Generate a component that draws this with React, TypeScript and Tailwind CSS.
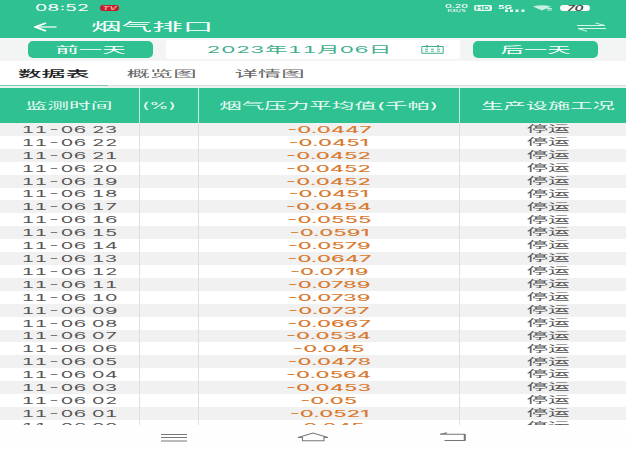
import clsx from 'clsx';
import type { ReactNode } from 'react';

type Row = { time: string; value: string; status: string };

const VALUES = [
  '-0.0447', '-0.0451', '-0.0452', '-0.0452', '-0.0452', '-0.0451',
  '-0.0454', '-0.0555', '-0.0591', '-0.0579', '-0.0647', '-0.0719',
  '-0.0789', '-0.0739', '-0.0737', '-0.0667', '-0.0534', '-0.045',
  '-0.0478', '-0.0564', '-0.0453', '-0.05', '-0.0521', '-0.045',
];

// 23時から00時まで、1時間ごとのデータ
const rows: Row[] = VALUES.map((value, i) => ({
  time: `11-06 ${String(23 - i).padStart(2, '0')}`,
  value,
  status: '停运',
}));

// 横長の文字
function Wide({ className, children }: { className?: string; children: ReactNode }) {
  return (
    <span className={clsx('inline-block whitespace-nowrap leading-none', className)}>
      {children}
    </span>
  );
}

function StatusBar() {
  return (
    <div className="flex h-4 items-center text-white">
      <div className="flex w-[100px] pl-[35px] pt-px">
        <Wide className="origin-left scale-x-[2.3] text-[8.5px]">08:52</Wide>
      </div>
      <div className="flex h-[6px] w-[19px] items-center justify-center rounded-[3px] bg-[#c01f2b]">
        <Wide className="scale-x-[2] text-[5px] font-bold italic text-[#f3a0a0]">TV</Wide>
      </div>
      <div className="ml-[326px] flex w-[23px] flex-col items-center">
        <Wide className="scale-x-[2.1] text-[5px] font-medium">0.20</Wide>
        <Wide className="scale-x-[2.1] text-[4px]">KB/s</Wide>
      </div>
      <div className="ml-[6px] flex h-[6px] w-[18px] items-center justify-center rounded-[2px] bg-[#e4f7f0]">
        <Wide className="scale-x-[2] text-[5px] font-bold text-[#2fc192]">HD</Wide>
      </div>
      <div className="ml-[6px] flex h-[7px] w-[27px] items-start">
        <Wide className="origin-left scale-x-[2] text-[5px] font-bold">5G</Wide>
        <svg className="mt-[4px] h-[3px] w-[20px]" viewBox="0 0 20 3" fill="#e4f7f0">
          <path d="M0 .5h3v2.500H0zM5 .5h3v2.500H5zM10.500 .5h3v2.500h-3zM16.500 .5h3v2.500h-3z" />
        </svg>
      </div>
      <svg className="ml-[8px] h-[6px] w-[20px]" viewBox="0 0 20 6">
        <path d="M0 1.5Q9-1 18 1.5L9 5.5Z" fill="#c8f0e0" />
        <path d="M14 3.5h5M14 5h5" stroke="#e4f7f0" strokeWidth=".8" />
      </svg>
      <div className="ml-[7px] flex h-[6px] w-[30px] items-center justify-center rounded-[3px] bg-[#f4fbf8]">
        <Wide className="scale-x-[1.95] text-[7px] font-semibold italic text-[#444]">70</Wide>
      </div>
    </div>
  );
}

function TitleBar() {
  return (
    <div className="flex h-[22px] items-center text-white">
      <svg className="ml-[34px] h-[10px] w-[23px] shrink-0" viewBox="0 0 23 10" fill="none" stroke="white">
        <path d="M1.5 5H22.5" strokeWidth="1.2" />
        <path d="M12 1L1.5 5L12 9" strokeWidth="1.8" />
      </svg>
      <div className="ml-[34px] flex w-[450px] shrink-0">
        <Wide className="origin-left scale-x-[2.78] text-[11px]">烟气排口</Wide>
      </div>
      <svg className="ml-[36px] h-[10px] w-[29px] shrink-0" viewBox="0 0 29 10" fill="none" stroke="#d8f5ea" strokeWidth="1">
        <path d="M0 3.5H28L18.500 1M29 6.500H1L10 9.300" />
      </svg>
    </div>
  );
}

function DateBar() {
  return (
    <div className="flex h-[23px] items-center bg-[#f3f4f4] pl-[28px]">
      <button className="flex h-[17px] w-[125px] items-center justify-center rounded-[5px] bg-[#2fc192] text-white">
        <Wide className="scale-x-[2.6] text-[9px]">前一天</Wide>
      </button>
      <div className="ml-[13px] flex h-[19px] w-[294px] items-center rounded-[3px] bg-white text-[#3faf8c]">
        <div className="ml-[40px] flex w-[186px] justify-center">
          <Wide className="scale-x-[2.38] text-[9.500px] tabular-nums">2023年11月06日</Wide>
        </div>
        <svg className="ml-[29px] h-[9px] w-[23px]" viewBox="0 0 23 9" fill="none" stroke="#3faf8c">
          <path d="M.8 1.500H22.200V8.300H.8Z" strokeWidth="1" />
          <path d="M6 0V2.500M17 0V2.500" strokeWidth="1.600" />
          <path d="M4 4.200H19M4 6.200H19" strokeDasharray="3 3" strokeWidth=".9" />
        </svg>
      </div>
      <button className="ml-[13px] flex h-[17px] w-[125px] items-center justify-center rounded-[5px] bg-[#2fc192] text-white">
        <Wide className="scale-x-[2.6] text-[9px]">后一天</Wide>
      </button>
    </div>
  );
}

function Tabs() {
  return (
    <div className="flex h-[27px] flex-col bg-white">
      <div className="flex h-6 items-center text-[#666]">
        <div className="flex w-[108px] justify-center">
          <Wide className="scale-x-[2.65] text-[9px] font-medium text-[#222]">数据表</Wide>
        </div>
        <div className="flex w-[108px] justify-center">
          <Wide className="scale-x-[2.6] text-[9px]">概览图</Wide>
        </div>
        <div className="flex w-[108px] justify-center">
          <Wide className="scale-x-[2.6] text-[9px]">详情图</Wide>
        </div>
      </div>
      <div className="h-px bg-[#dedede]">
        <div className="h-px w-[108px] bg-[#7cc9ae]" />
      </div>
      <div className="h-[2px] bg-[#eaf3ef]" />
    </div>
  );
}

const COLS = 'grid grid-cols-[140px_59px_261px_166px]';

function DataTable() {
  return (
    <div className="h-[337px] overflow-hidden">
      <div className={clsx(COLS, 'h-[35px] bg-[#2fc192] text-[9px] text-[#e9fbf4]')}>
        <div className="flex items-center justify-center border-r border-[#c9eede]">
          <Wide className="scale-x-[2.42]">监测时间</Wide>
        </div>
        <div className="flex items-center border-r border-[#c9eede] pl-[2px]">
          <Wide className="origin-left scale-x-[2.200]">(%)</Wide>
        </div>
        <div className="flex items-center justify-center border-r border-[#c9eede]">
          <Wide className="scale-x-[2.5]">烟气压力平均值(千帕)</Wide>
        </div>
        <div className="flex items-center justify-center pl-[11px]">
          <Wide className="scale-x-[2.47]">生产设施工况</Wide>
        </div>
      </div>
      {rows.map((row, i) => (
        <div
          key={row.time}
          className={clsx(COLS, 'h-[12.910px] text-[9px] text-[#555]', i % 2 === 0 ? 'bg-[#f1f1f1]' : 'bg-white')}
        >
          <div className="flex items-center justify-center border-r border-[#dfdfdf]">
            <Wide className="scale-x-[2.23] tabular-nums">{row.time}</Wide>
          </div>
          <div className="border-r border-[#dfdfdf]" />
          <div className="flex items-center justify-center border-r border-[#dfdfdf] text-[#d97a30]">
            <Wide className="scale-x-[2.42] font-medium">{row.value}</Wide>
          </div>
          <div className="flex items-center justify-center pb-[1.500px] pl-[11px]">
            <Wide className="scale-x-[2.4]">{row.status}</Wide>
          </div>
        </div>
      ))}
    </div>
  );
}

function NavBar() {
  return (
    <div className="flex h-6 items-start bg-[#fefefe] pt-[7px]">
      <svg className="ml-[161px] mt-[2px] h-[8px] w-[26px]" viewBox="0 0 26 8" stroke="#777" strokeWidth="1">
        <path d="M0 .5H26M0 3.500H26M0 7H26" />
      </svg>
      <svg className="ml-[110px] h-[10px] w-[32px]" viewBox="0 0 32 10" fill="none" stroke="#777" strokeWidth="1.100">
        <path d="M5.500 8.800V5.500H1L16 1L31 5.500H27V8.800Z" />
      </svg>
      <svg className="ml-[110px] h-[10px] w-[28px]" viewBox="0 0 28 10" fill="none" stroke="#777" strokeWidth="1.100">
        <path d="M8 .8L1 2.200H25.500V8.500H5.500" />
        <path d="M25.800 2V8.800" strokeWidth="2" />
      </svg>
    </div>
  );
}

export default function App() {
  return (
    <main className="h-[449px] w-[626px] overflow-hidden bg-white font-['Inter','Noto_Sans_CJK_SC',sans-serif]">
      <header className="h-[38px] bg-[#2fc192]">
        <StatusBar />
        <TitleBar />
      </header>
      <DateBar />
      <Tabs />
      <DataTable />
      <NavBar />
    </main>
  );
}
